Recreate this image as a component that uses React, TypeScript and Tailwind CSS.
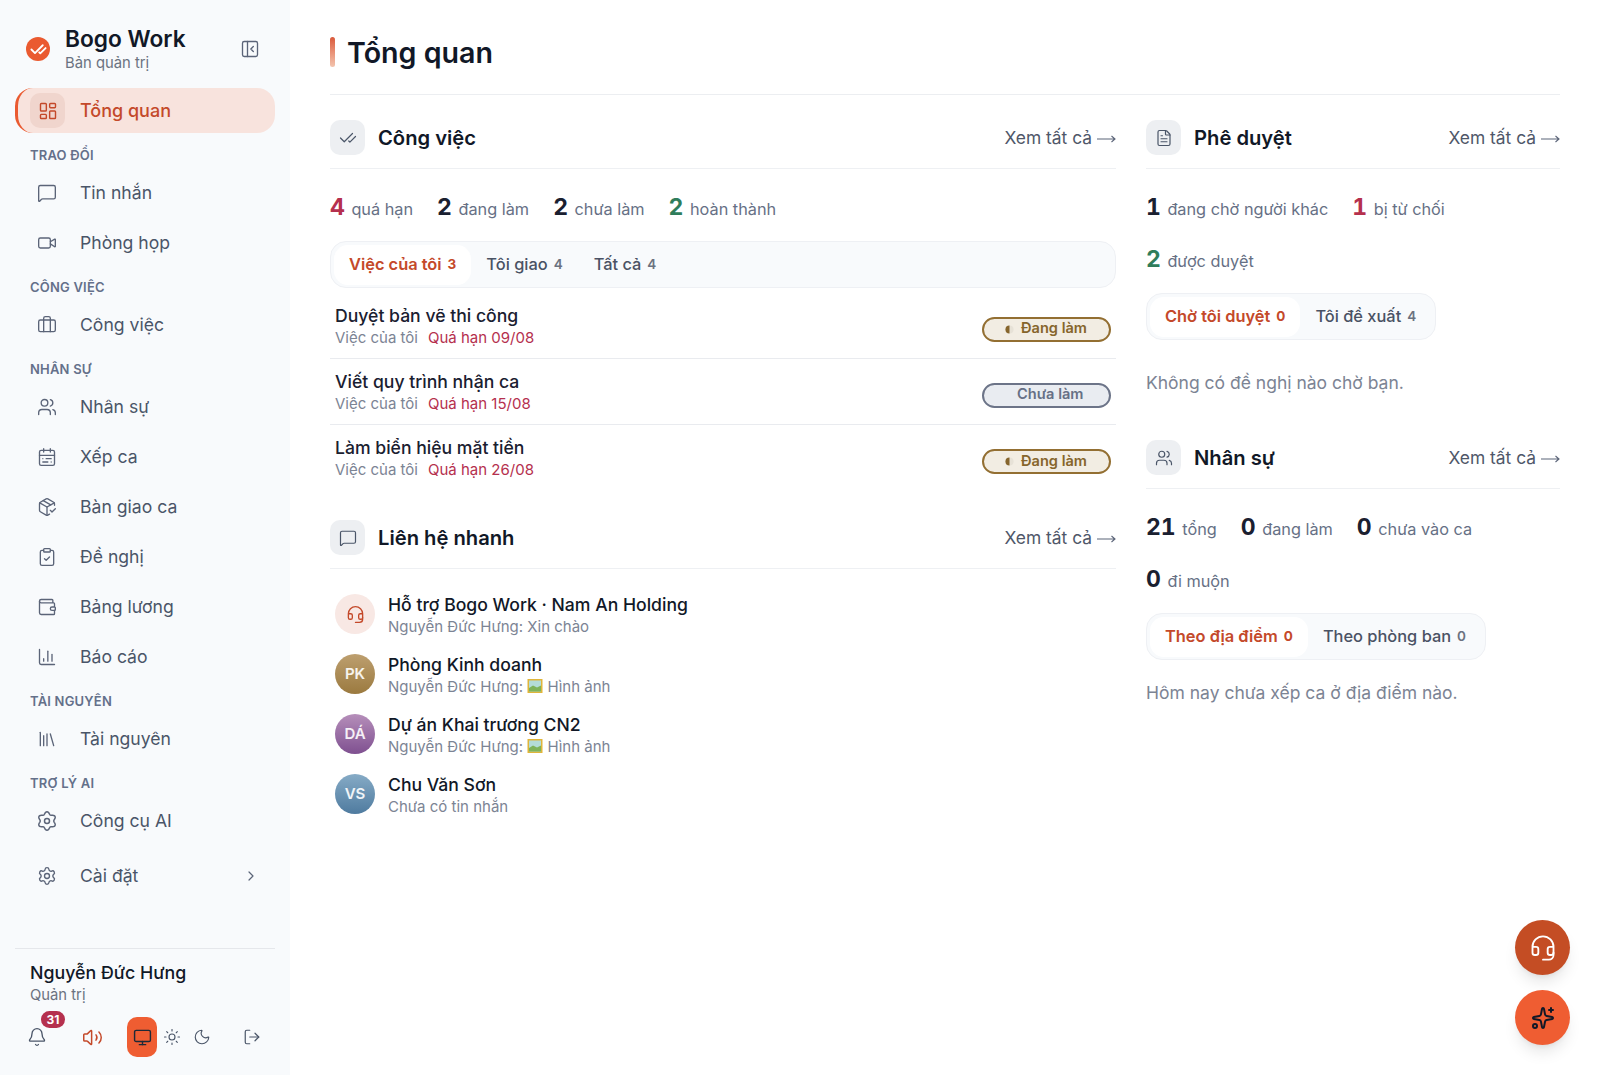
import React from "react";
import {
  BarChart3,
  Bell,
  CalendarRange,
  CheckCheck,
  ChevronRight,
  ClipboardCheck,
  FileText,
  Headset,
  LayoutDashboard,
  Library,
  LogOut,
  MessageSquare,
  Monitor,
  Moon,
  PackageCheck,
  PanelLeftClose,
  Settings,
  Sparkles,
  Sun,
  Users,
  Video,
  Volume2,
  Wallet,
  Briefcase,
} from "lucide-react";

// rounded six-lobed gear used for the AI tools entry
const gearPoints = Array.from({ length: 72 }, (_, i) => {
  const a = (i / 72) * Math.PI * 2;
  const r = 9.6 + 1.5 * Math.cos(6 * a);
  return `${(12 + r * Math.sin(a)).toFixed(2)},${(12 - r * Math.cos(a)).toFixed(2)}`;
}).join(" ");

function AiToolIcon({ size = 20, strokeWidth = 1.6, className }: { size?: number; strokeWidth?: number; className?: string }) {
  return (
    <svg
      width={size}
      height={size}
      viewBox="0 0 24 24"
      fill="none"
      stroke="currentColor"
      strokeWidth={strokeWidth * 1.1}
      strokeLinejoin="round"
      className={className}
    >
      <polygon points={gearPoints} />
      <circle cx="12" cy="12" r="3" />
    </svg>
  );
}

const navGroups = [
  {
    label: "Trao đổi",
    items: [
      { name: "Tin nhắn", icon: MessageSquare },
      { name: "Phòng họp", icon: Video },
    ],
  },
  { label: "Công việc", items: [{ name: "Công việc", icon: Briefcase }] },
  {
    label: "Nhân sự",
    items: [
      { name: "Nhân sự", icon: Users },
      { name: "Xếp ca", icon: CalendarRange },
      { name: "Bàn giao ca", icon: PackageCheck },
      { name: "Đề nghị", icon: ClipboardCheck },
      { name: "Bảng lương", icon: Wallet },
      { name: "Báo cáo", icon: BarChart3 },
    ],
  },
  { label: "Tài nguyên", items: [{ name: "Tài nguyên", icon: Library }] },
  { label: "Trợ lý AI", items: [{ name: "Công cụ AI", icon: AiToolIcon }] },
];

function PictureIcon() {
  return (
    <svg width="16" height="16" viewBox="0 0 16 16" className="inline-block align-[-2px]">
      <rect x="0.5" y="1" width="15" height="14" fill="#e0b53a" />
      <rect x="2" y="2.5" width="12" height="11" fill="#b4dcd8" />
      <path d="M2 10 L6 7.5 L10 9.5 L14 7.5 V13.5 H2 Z" fill="#7fb35a" />
    </svg>
  );
}

function NavItem({ name, icon: Icon }: { name: string; icon: React.ElementType }) {
  return (
    <div className="flex h-[50px] items-center pl-[22px] text-[17.6px] text-[#4a5568]">
      <Icon size={20} strokeWidth={1.6} className="shrink-0 text-[#5b6478]" />
      <span className="ml-[23px]">{name}</span>
    </div>
  );
}

function Sidebar() {
  return (
    <aside className="flex h-[1075px] w-[290px] shrink-0 flex-col bg-[#f8fafc] pl-[15px] pr-[15px]">
      <div className="flex h-[88px] items-center pl-[11px] pr-[15px] pt-[10px]">
        <div className="flex h-[24px] w-[24px] shrink-0 items-center justify-center rounded-full bg-[#ea5a30]">
          <CheckCheck size={17} strokeWidth={2.6} className="text-white" />
        </div>
        <div className="ml-[15px] -mt-[2px] flex-1">
          <div className="text-[22.7px] font-semibold leading-[30px] text-[#111827]">Bogo Work</div>
          <div className="text-[14.8px] leading-[18px] text-[#6b7280]">Bản quản trị</div>
        </div>
        <PanelLeftClose size={20} strokeWidth={1.6} className="text-[#5b6478]" />
      </div>

      <div className="flex h-[45px] items-center rounded-[18px] border-l-[3px] border-[#ea5a30] bg-[#f8e3dd] pl-[12px] text-[18px] font-medium text-[#c4492a]">
        <div className="flex h-[35px] w-[35px] items-center justify-center rounded-[10px] bg-[#f0d5cd]">
          <LayoutDashboard size={20} strokeWidth={1.7} />
        </div>
        <span className="ml-[15px]">Tổng quan</span>
      </div>

      {navGroups.map((group, i) => (
        <div key={group.label}>
          <div
            className={`${i === 0 ? "pt-[14px]" : "pt-[11px]"} pb-[5px] pl-[15px] text-[13px] font-semibold uppercase leading-[16px] tracking-[0.2px] text-[#64708a]`}
          >
            {group.label}
          </div>
          {group.items.map((item) => (
            <NavItem key={item.name} name={item.name} icon={item.icon} />
          ))}
        </div>
      ))}

      <div className="mt-[5px] flex h-[50px] items-center pl-[22px] pr-[16px] text-[17.6px] text-[#4a5568]">
        <Settings size={20} strokeWidth={1.6} className="shrink-0 text-[#5b6478]" />
        <span className="ml-[23px] flex-1">Cài đặt</span>
        <ChevronRight size={16} strokeWidth={1.8} className="text-[#5b6478]" />
      </div>

      <div className="mt-auto border-t border-[#e5e7eb] pb-[18px] pt-[12px]">
        <div className="pl-[15px] text-[17.8px] font-medium leading-[24px] text-[#111827]">Nguyễn Đức Hưng</div>
        <div className="pl-[15px] text-[14.8px] leading-[20px] text-[#6b7280]">Quản trị</div>
        <div className="relative mt-[12px] flex h-[40px] items-center pl-[12px] text-[#4a5568]">
          <div className="relative">
            <Bell size={20} strokeWidth={1.6} />
            <span className="absolute -top-[16px] left-[14px] flex h-[17px] w-[24px] items-center justify-center rounded-full bg-[#b5304e] text-[12px] font-bold text-white">
              31
            </span>
          </div>
          <Volume2 size={21} strokeWidth={1.7} className="ml-[35px] text-[#c4492a]" />
          <div className="ml-[24px] flex h-[40px] w-[30px] items-center justify-center rounded-[10px] bg-[#ef5d32] text-[#1f2937]">
            <Monitor size={19} strokeWidth={1.8} />
          </div>
          <Sun size={18} strokeWidth={1.5} className="ml-[6px]" />
          <Moon size={18} strokeWidth={1.5} className="ml-[12px]" />
          <LogOut size={18} strokeWidth={1.6} className="ml-[32px]" />
        </div>
      </div>
    </aside>
  );
}

function SectionHeader({ icon: Icon, title }: { icon: React.ElementType; title: string }) {
  return (
    <div className="flex h-[49px] items-start justify-between border-b-[1.5px] border-[#eef0f3]">
      <div className="flex items-center">
        <div className="flex h-[35px] w-[35px] items-center justify-center rounded-[10px] bg-[#edeff2] text-[#4a5568]">
          <Icon size={18} strokeWidth={1.6} />
        </div>
        <h2 className="ml-[13px] mt-[2px] text-[20.2px] font-semibold text-[#111827]">{title}</h2>
      </div>
      <div className="mt-[5px] flex items-center text-[17.4px] leading-[26px] text-[#4f5769]">
        Xem tất cả
        <svg width="19" height="10" viewBox="0 0 19 10" className="ml-[5px] mt-[2px]" fill="none" stroke="#5b6478" strokeWidth="1.1">
          <path d="M0 5 H18 M14.5 2 L18 5 L14.5 8" />
        </svg>
      </div>
    </div>
  );
}

function Stat({ value, label, color = "text-[#1a2030]" }: { value: string; label: string; color?: string }) {
  return (
    <div className="flex items-baseline gap-[6.5px]">
      <span className={`text-[23px] font-bold leading-[32px] tabular-nums ${color}`}>{value}</span>
      <span className="text-[16.3px] text-[#667085]">{label}</span>
    </div>
  );
}

function Tabs({ tabs, full }: { tabs: { name: string; count: number }[]; full?: boolean }) {
  return (
    <div
      className={`flex h-[47px] items-center gap-[1px] rounded-[16px] border-[1.5px] border-[#eef0f4] bg-[#f8fafc] px-[3px] ${full ? "w-full" : "w-fit"}`}
    >
      {tabs.map((t, i) =>
        i === 0 ? (
          <div
            key={t.name}
            className="flex h-[40px] items-center gap-[6px] rounded-[14px] bg-white px-[15px] text-[16.4px] font-semibold text-[#c4492a]"
          >
            {t.name}
            <span className="text-[13.5px] font-bold">{t.count}</span>
          </div>
        ) : (
          <div key={t.name} className="flex items-center gap-[6px] pl-[14px] pr-[16px] text-[16.4px] font-medium text-[#4a5264]">
            {t.name}
            <span className="text-[13.5px] font-semibold text-[#6b7280]">{t.count}</span>
          </div>
        ),
      )}
    </div>
  );
}

function StatusBadge({ done }: { done: boolean }) {
  if (done) {
    return (
      <div className="mr-[5px] mt-[7px] flex h-[25px] w-[129px] items-center rounded-full border-2 border-[#936f32] bg-[#f2ede3] pl-[21px] text-[14.6px] font-semibold text-[#86652c]">
        <svg width="9" height="9" viewBox="0 0 10 10" className="mr-[7px]">
          <circle cx="5" cy="5" r="4.5" fill="#e7e2d7" />
          <path d="M5 .5 A4.5 4.5 0 0 0 5 9.5 Z" fill="#86652c" />
        </svg>
        Đang làm
      </div>
    );
  }
  return (
    <div className="mr-[5px] mt-[7px] flex h-[25px] w-[129px] items-center rounded-full border-2 border-[#6c7488] bg-[#e9ecf1] pl-[33px] text-[14.6px] font-semibold text-[#667085]">
      Chưa làm
    </div>
  );
}

function TaskRow({ title, due, done, last }: { title: string; due: string; done: boolean; last?: boolean }) {
  return (
    <div className={`flex h-[66px] items-center justify-between pl-[5px] ${last ? "" : "border-b-[1.5px] border-[#e9ebef]"}`}>
      <div>
        <div className="text-[17.6px] font-medium leading-[24px] text-[#1a2030]">{title}</div>
        <div className="text-[15px] leading-[20px] text-[#7c8494]">
          Việc của tôi
          <span className="ml-[10px] text-[#b5304e]">Quá hạn {due}</span>
        </div>
      </div>
      <StatusBadge done={done} />
    </div>
  );
}

function ContactRow({
  avatar,
  name,
  sub,
  picture,
}: {
  avatar: React.ReactNode;
  name: string;
  sub: string;
  picture?: boolean;
}) {
  return (
    <div className="flex h-[60px] items-center pl-[5px]">
      {avatar}
      <div className="ml-[13px] mt-[2px]">
        <div className="text-[17.6px] font-medium leading-[24px] text-[#111827]">{name}</div>
        <div className="text-[15px] leading-[20px] text-[#7c8494]">
          {sub}
          {picture && (
            <>
              {" "}
              <PictureIcon /> Hình ảnh
            </>
          )}
        </div>
      </div>
    </div>
  );
}

function Initials({ text, bg }: { text: string; bg: string }) {
  return (
    <div className={`flex h-[40px] w-[40px] shrink-0 items-center justify-center rounded-full ${bg} text-[15px] font-semibold text-white/90`}>
      {text}
    </div>
  );
}

export default function App() {
  return (
    <div className="relative flex min-h-[1075px] bg-white font-['Inter',sans-serif]">
      <Sidebar />
      <main className="flex-1 pl-[40px] pr-[40px]">
        <div className="flex h-[95px] items-start border-b-[1.5px] border-[#eceef1] pt-[37px]">
          <div className="h-[30px] w-[5px] rounded-full bg-gradient-to-b from-[#d9583a] to-[#f2c4ae]" />
          <h1 className="ml-[12px] mt-[1px] text-[28.6px] font-semibold leading-[30px] text-[#111827]">Tổng quan</h1>
        </div>

        <div className="flex gap-[30px] pt-[25px]">
          <div className="w-[786px] shrink-0">
            <SectionHeader icon={CheckCheck} title="Công việc" />
            <div className="mt-[22px] flex gap-[24px]">
              <Stat value="4" label="quá hạn" color="text-[#b5304e]" />
              <Stat value="2" label="đang làm" />
              <Stat value="2" label="chưa làm" />
              <Stat value="2" label="hoàn thành" color="text-[#2f7d5b]" />
            </div>
            <div className="mt-[18px]">
              <Tabs
                full
                tabs={[
                  { name: "Việc của tôi", count: 3 },
                  { name: "Tôi giao", count: 4 },
                  { name: "Tất cả", count: 4 },
                ]}
              />
            </div>
            <div className="mt-[5px]">
              <TaskRow title="Duyệt bản vẽ thi công" due="09/08" done />
              <TaskRow title="Viết quy trình nhận ca" due="15/08" done={false} />
              <TaskRow title="Làm biển hiệu mặt tiền" due="26/08" done last />
            </div>

            <div className="mt-[29px]">
              <SectionHeader icon={MessageSquare} title="Liên hệ nhanh" />
            </div>
            <div className="mt-[15px]">
              <ContactRow
                avatar={
                  <div className="flex h-[40px] w-[40px] shrink-0 items-center justify-center rounded-full bg-[#f8e8e4] text-[#c4492a]">
                    <Headset size={19} strokeWidth={1.7} />
                  </div>
                }
                name="Hỗ trợ Bogo Work · Nam An Holding"
                sub="Nguyễn Đức Hưng: Xin chào"
              />
              <ContactRow
                avatar={<Initials text="PK" bg="bg-gradient-to-b from-[#bd9f6f] to-[#9b7a3f]" />}
                name="Phòng Kinh doanh"
                sub="Nguyễn Đức Hưng:"
                picture
              />
              <ContactRow
                avatar={<Initials text="DÁ" bg="bg-gradient-to-b from-[#b68fba] to-[#7f5090]" />}
                name="Dự án Khai trương CN2"
                sub="Nguyễn Đức Hưng:"
                picture
              />
              <ContactRow
                avatar={<Initials text="VS" bg="bg-gradient-to-b from-[#86abc6] to-[#4f7b9f]" />}
                name="Chu Văn Sơn"
                sub="Chưa có tin nhắn"
              />
            </div>
          </div>

          <div className="flex-1">
            <SectionHeader icon={FileText} title="Phê duyệt" />
            <div className="mt-[22px] flex flex-wrap gap-x-[24px] gap-y-[20px]">
              <Stat value="1" label="đang chờ người khác" />
              <Stat value="1" label="bị từ chối" color="text-[#b5304e]" />
              <Stat value="2" label="được duyệt" color="text-[#2f7d5b]" />
            </div>
            <div className="mt-[18px]">
              <Tabs
                tabs={[
                  { name: "Chờ tôi duyệt", count: 0 },
                  { name: "Tôi đề xuất", count: 4 },
                ]}
              />
            </div>
            <p className="mt-[30px] text-[17.5px] leading-[26px] text-[#7c8494]">Không có đề nghị nào chờ bạn.</p>

            <div className="mt-[44px]">
              <SectionHeader icon={Users} title="Nhân sự" />
            </div>
            <div className="mt-[22px] flex flex-wrap gap-x-[24px] gap-y-[20px]">
              <Stat value="21" label="tổng" />
              <Stat value="0" label="đang làm" />
              <Stat value="0" label="chưa vào ca" />
              <Stat value="0" label="đi muộn" />
            </div>
            <div className="mt-[18px]">
              <Tabs
                tabs={[
                  { name: "Theo địa điểm", count: 0 },
                  { name: "Theo phòng ban", count: 0 },
                ]}
              />
            </div>
            <p className="mt-[20px] text-[17.5px] leading-[26px] text-[#7c8494]">Hôm nay chưa xếp ca ở địa điểm nào.</p>
          </div>
        </div>
      </main>

      <div className="absolute bottom-[30px] right-[30px] flex flex-col gap-[15px]">
        <div className="flex h-[55px] w-[55px] items-center justify-center rounded-full bg-[#c44d24] text-white shadow-lg">
          <Headset size={28} strokeWidth={1.6} />
        </div>
        <div className="flex h-[55px] w-[55px] items-center justify-center rounded-full bg-[#ef5d32] text-[#111827] shadow-lg">
          <Sparkles size={24} strokeWidth={2} />
        </div>
      </div>
    </div>
  );
}
